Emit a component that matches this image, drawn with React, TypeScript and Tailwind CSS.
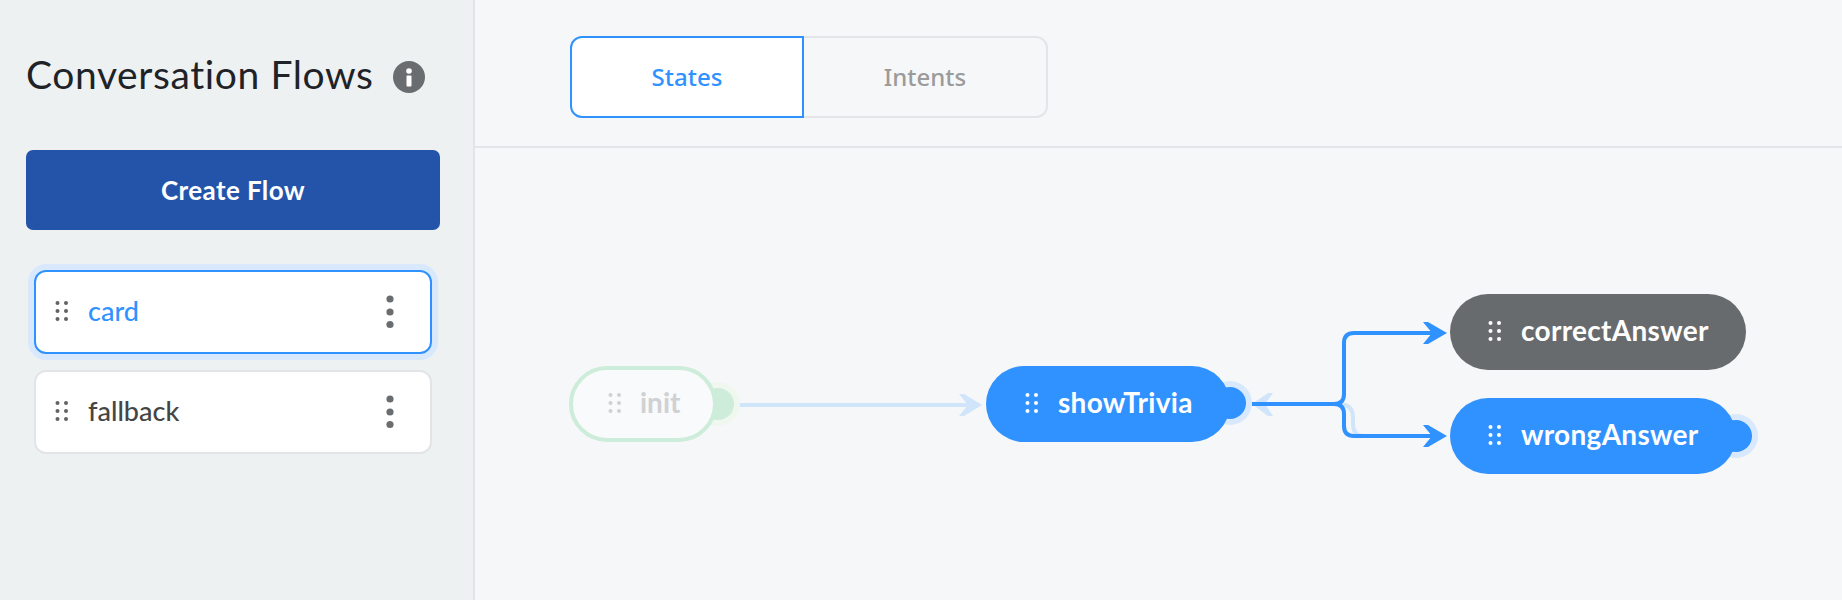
const Grip = ({ className }: { className: string }) => {
  return (
    <svg width="14" height="20" viewBox="0 0 14 20" className={className}>
      {[2, 10, 18].map((y) =>
        [2.5, 11].map((x) => (
          <circle key={`${x}-${y}`} cx={x} cy={y} r="2" fill="currentColor" />
        ))
      )}
    </svg>
  );
};

function FlowCard({ name, active }: { name: string; active?: boolean }) {
  return (
    <div
      className={
        active
          ? "flex h-[84px] w-[398px] items-center rounded-[12px] border-2 border-[#3092ff] bg-white pl-[19px] pr-[36px] shadow-[0_0_0_6px_#d8e9fd]"
          : "flex h-[84px] w-[398px] items-center rounded-[12px] border-2 border-[#e2e5e7] bg-white pl-[19px] pr-[36px]"
      }
    >
      <Grip className="mb-[2px] shrink-0 text-[#606264]" />
      <span
        className={
          active
            ? "ml-[19px] flex-1 pb-[2px] text-[27px] font-medium text-[#3092ff]"
            : "ml-[19px] flex-1 pb-[2px] text-[27px] font-medium text-[#454545]"
        }
      >
        {name}
      </span>
      <svg width="8" height="34" className="shrink-0 fill-[#6a6d70]" viewBox="0 0 8 34">
        <circle cx="4" cy="4" r="3.6" />
        <circle cx="4" cy="17" r="3.6" />
        <circle cx="4" cy="29.5" r="3.6" />
      </svg>
    </div>
  );
}

function Sidebar() {
  return (
    <aside className="h-full w-[475px] shrink-0 border-r-2 border-[#e2e5e7] bg-[#eef1f2] pl-[26px] pt-[51px]">
      <div className="flex h-[50px] items-center">
        <h1 className="pb-[5px] text-[39px] font-normal leading-[50px] tracking-[0.6px] text-[#1f2328]">
          Conversation Flows
        </h1>
        <svg width="32" height="32" viewBox="0 0 32 32" className="ml-[19px] mt-[2px]">
          <circle cx="16" cy="16" r="16" fill="#6a6d70" />
          <circle cx="16" cy="10" r="2.8" fill="#fff" />
          <rect x="13.5" y="14.5" width="5" height="11" rx="1" fill="#fff" />
        </svg>
      </div>
      <button className="mt-[49px] flex h-[80px] w-[414px] items-center justify-center rounded-[7px] bg-[#2354aa] text-[26px] font-bold tracking-[0.4px] text-white">
        Create Flow
      </button>
      <div className="ml-[8px] mt-[40px] flex flex-col gap-[16px]">
        <FlowCard name="card" active />
        <FlowCard name="fallback" />
      </div>
    </aside>
  );
}

function Tabs() {
  return (
    <div className="h-[148px] border-b-2 border-[#e3e5e8] pl-[95px] pt-[36px]">
      <div className="flex h-[82px] w-[478px] font-['Noto_Sans',sans-serif] text-[24px] font-medium">
        <div className="flex w-[234px] items-center justify-center rounded-l-[12px] border-2 border-[#3092ff] bg-white text-[#3092ff]">
          States
        </div>
        <div className="flex flex-1 items-center justify-center rounded-r-[12px] border-y-2 border-r-2 border-[#e3e5e8] text-[#9b9b9b]">
          Intents
        </div>
      </div>
    </div>
  );
}

function Edges() {
  return (
    <svg width="1367" height="452" viewBox="475 148 1367 452" className="absolute left-0 top-0" fill="none">
      <path d="M738 405H970" stroke="#d0e4fa" strokeWidth="4" />
      <path d="M982 405L964 394H959L968 405L959 416H964Z" fill="#d0e4fa" />
      <path d="M1252 404L1268 393H1273L1265 404L1273 416H1268Z" fill="#d0e4fa" />
      <path d="M1338 404Q1353 404 1353 417V424Q1353 436 1364 436" stroke="#d0e4fa" strokeWidth="4" />
      <path
        d="M1252 404H1334Q1344 404 1344 394V343Q1344 333 1354 333H1436M1334 404Q1344 404 1344 414V426Q1344 436 1354 436H1436"
        stroke="#3092ff"
        strokeWidth="4"
      />
      <path d="M1447 333L1428 322H1423L1432 333L1423 344H1428Z" fill="#3092ff" />
      <path d="M1447 436L1428 425H1423L1432 436L1423 447H1428Z" fill="#3092ff" />
    </svg>
  );
}

function Canvas() {
  return (
    <div className="relative flex-1">
      <Edges />

      {/* init */}
      <div className="absolute left-[94px] top-[218px]">
        <span className="absolute left-[133px] top-[22px] h-[32px] w-[32px] rounded-full bg-[#cdecd9] shadow-[0_0_0_6px_#eff7ee]" />
        <div className="relative flex h-[76px] w-[148px] items-center rounded-full border-[4px] border-[#cdecd9] bg-[#f9fafb] pl-[35px] text-[28px] font-bold text-[#d0d1d3]">
          <Grip className="mb-[2px] shrink-0" />
          <span className="ml-[18px] pb-[4px]">init</span>
        </div>
      </div>

      {/* showTrivia */}
      <div className="absolute left-[511px] top-[218px]">
        <span className="absolute left-[228px] top-[21px] h-[32px] w-[32px] rounded-full bg-[#3092ff] shadow-[0_0_0_6px_#d8e9fd]" />
        <div className="relative flex h-[76px] w-[244px] items-center rounded-full bg-[#3092ff] pl-[39px] text-[28px] font-bold tracking-[0.3px] text-white">
          <Grip className="mb-[2px] shrink-0" />
          <span className="ml-[19px] pb-[4px]">showTrivia</span>
        </div>
      </div>

      {/* correctAnswer */}
      <div className="absolute left-[975px] top-[146px]">
        <div className="relative flex h-[76px] w-[296px] items-center rounded-full bg-[#686b6e] pl-[38px] text-[28px] font-bold tracking-[0.3px] text-white">
          <Grip className="mb-[2px] shrink-0" />
          <span className="ml-[19px] pb-[4px]">correctAnswer</span>
        </div>
      </div>

      {/* wrongAnswer */}
      <div className="absolute left-[975px] top-[250px]">
        <span className="absolute left-[270px] top-[22px] h-[32px] w-[32px] rounded-full bg-[#3092ff] shadow-[0_0_0_6px_#d8e9fd]" />
        <div className="relative flex h-[76px] w-[286px] items-center rounded-full bg-[#3092ff] pl-[38px] text-[28px] font-bold tracking-[0.3px] text-white">
          <Grip className="mb-[2px] shrink-0" />
          <span className="ml-[19px] pb-[4px]">wrongAnswer</span>
        </div>
      </div>
    </div>
  );
}

export default function App() {
  return (
    <div className="flex h-[600px] w-[1842px] overflow-hidden bg-[#f6f7f9] font-['Lato',sans-serif]">
      <Sidebar />
      <main className="flex h-full flex-1 flex-col">
        <Tabs />
        <Canvas />
      </main>
    </div>
  );
}
